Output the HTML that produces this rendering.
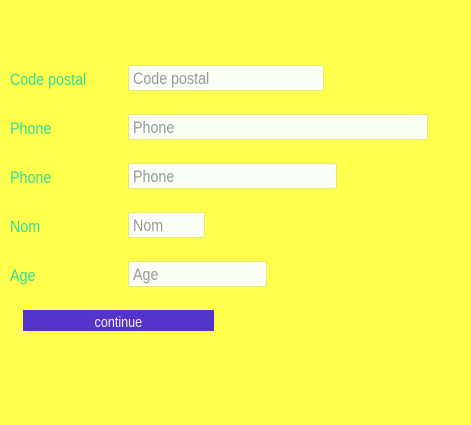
<!DOCTYPE html>
<html><head><style>
body{margin:0;width:471px;height:425px;background:#ffff4c;font-family:"Liberation Sans",sans-serif;font-size:17px;position:relative;overflow:hidden}
span{display:inline-block;transform:scaleX(0.84);transform-origin:0 50%}
.l{position:absolute;left:10px;color:#33dd99;line-height:26px}
.i{position:absolute;left:128px;height:24px;background:#fafff6;border:1px solid #e8e870;border-radius:2px;color:#999;line-height:26px;padding-left:4px;box-sizing:content-box}
.b{position:absolute;left:23px;top:310px;width:191px;height:21px;background:#5533cc;color:#eee;text-align:center;line-height:25px;font-size:15px}
.b span{transform-origin:50% 50%}
</style></head><body>
<div class="l" style="top:67px"><span>Code postal</span></div><div class="i" style="top:65px;width:190px"><span>Code postal</span></div>
<div class="l" style="top:116px"><span>Phone</span></div><div class="i" style="top:114px;width:294px"><span>Phone</span></div>
<div class="l" style="top:165px"><span>Phone</span></div><div class="i" style="top:163px;width:203px"><span>Phone</span></div>
<div class="l" style="top:214px"><span>Nom</span></div><div class="i" style="top:212px;width:71px"><span>Nom</span></div>
<div class="l" style="top:263px"><span>Age</span></div><div class="i" style="top:261px;width:133px"><span>Age</span></div>
<div class="b"><span>continue</span></div>
</body></html>
